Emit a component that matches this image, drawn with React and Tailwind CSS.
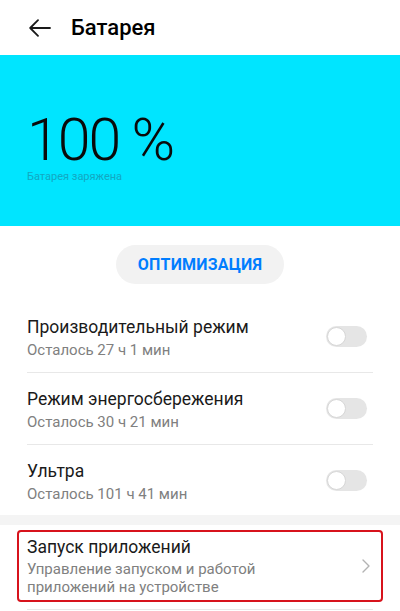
import { useState } from "react";

const MODES = [
  { title: "Производительный режим", sub: "Осталось 27 ч 1 мин" },
  { title: "Режим энергосбережения", sub: "Осталось 30 ч 21 мин" },
  { title: "Ультра", sub: "Осталось 101 ч 41 мин" },
];

function Toggle({ on, onClick }) {
  return (
    <button
      onClick={onClick}
      className={`relative w-[41px] h-[21px] rounded-full mr-[6px] shrink-0 ${on ? "bg-[#007dff]" : "bg-[#e5e5e5]"}`}
    >
      <span
        className={`absolute top-[1px] w-[19px] h-[19px] rounded-full bg-white border border-[#d6d6d6] ${on ? "left-[21px]" : "left-[1px]"}`}
      />
    </button>
  );
}

export default function App() {
  const [modes, setModes] = useState([false, false, false]);

  return (
    <div className="w-[400px] h-[611px] overflow-hidden bg-white font-['Roboto',sans-serif] text-[#1a1a1a]">
      {/* header */}
      <div className="h-[55px] flex items-center">
        <svg className="ml-[29px]" width="22" height="18" viewBox="0 0 22 18" fill="none" stroke="#1a1a1a" strokeWidth="1.8" strokeLinecap="round" strokeLinejoin="round">
          <path d="M21 9H1.5M9 1.2L1.2 9 9 16.8" />
        </svg>
        <h1 className="ml-[20px] text-[22px] leading-[26px] font-medium text-black">Батарея</h1>
      </div>

      {/* battery level */}
      <div className="h-[171px] bg-[#00e5ff] pl-[27px] pt-[61px]">
        <div className="text-[59px] leading-[48px] font-light text-[#0a0a0a] tracking-[-2px]">100 %</div>
        <div className="text-[11px] leading-[14px] text-[#12a8c2] mt-[6px]">Батарея заряжена</div>
      </div>

      <div className="flex justify-center pt-[19px]">
        <button className="w-[168px] h-[39px] rounded-full bg-[#f2f2f2] text-[#007dff] text-[16px] font-bold tracking-[0.2px]">
          ОПТИМИЗАЦИЯ
        </button>
      </div>

      {/* modes */}
      <div className="px-[27px] mt-[17px]">
        {MODES.map((m, i) => (
          <div
            key={i}
            className={`flex items-center ${i < 2 ? "h-[72px] border-b border-[#e8e8e8]" : "h-[70px]"}`}
          >
            <div className="flex-1 pt-[3px]">
              <div className="text-[17.5px] leading-[22px]">{m.title}</div>
              <div className="text-[15px] leading-[20px] text-[#808080] mt-[2px]">{m.sub}</div>
            </div>
            <Toggle on={modes[i]} onClick={() => setModes(modes.map((v, j) => (j === i ? !v : v)))} />
          </div>
        ))}
      </div>

      <div className="h-[10px] bg-[#f4f4f4]" />

      {/* app launch */}
      <div className="mx-[17px] mt-[5px] h-[72px] border-2 border-[#d7131c] rounded-[4px] flex items-center pl-[8px] pr-[11px]">
        <div className="flex-1 -mt-[1px]">
          <div className="text-[17.5px] leading-[22px]">Запуск приложений</div>
          <div className="text-[15px] leading-[18px] text-[#808080] mt-[2px]">
            Управление запуском и работой
            <br />
            приложений на устройстве
          </div>
        </div>
        <svg width="8" height="14" viewBox="0 0 8 14" fill="none" stroke="#b3b3b3" strokeWidth="1.4" strokeLinecap="round" strokeLinejoin="round">
          <path d="M1 1l6 6-6 6" />
        </svg>
      </div>
      <div className="mx-[27px] mt-[7px] border-b border-[#e8e8e8]" />
    </div>
  );
}
